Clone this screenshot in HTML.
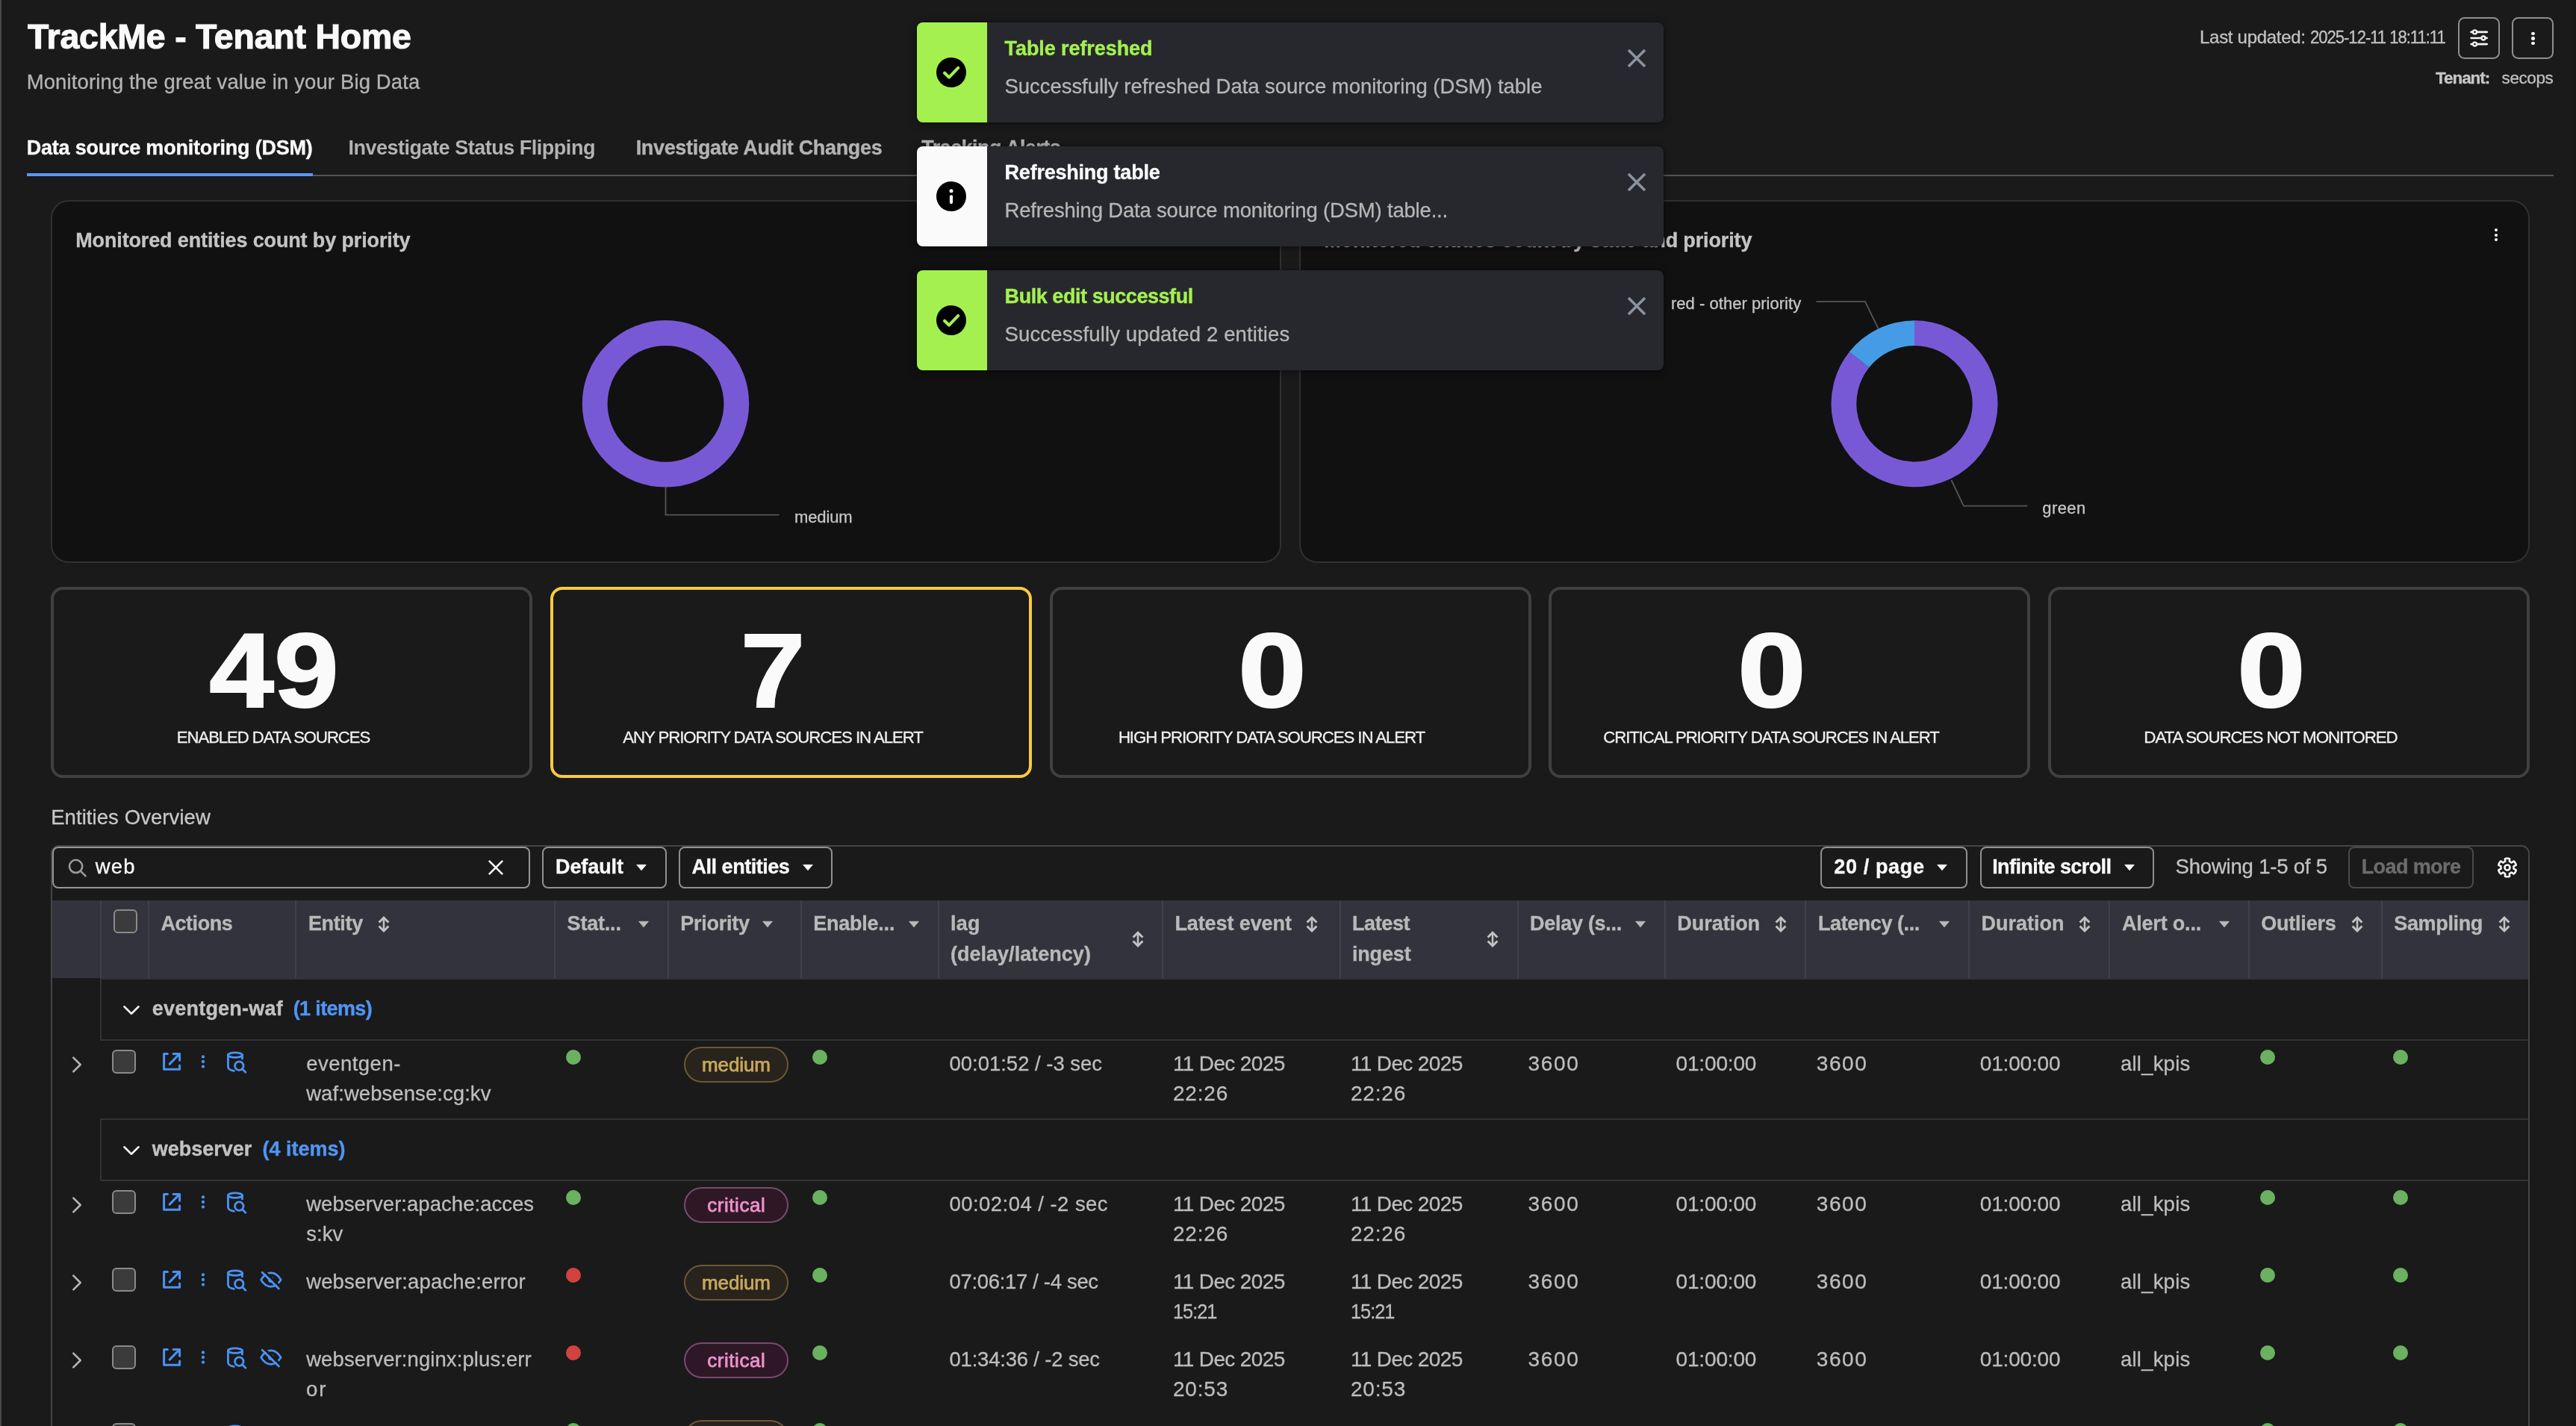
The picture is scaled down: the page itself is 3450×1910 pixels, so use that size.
<!DOCTYPE html>
<html><head><meta charset="utf-8"><title>TrackMe - Tenant Home</title>
<style>
html,body{margin:0;padding:0;background:#1a1a1a;}
body{width:3450px;height:1910px;overflow:hidden;font-family:"Liberation Sans",sans-serif;}
#root{position:relative;width:3450px;height:1910px;overflow:hidden;background:#1a1a1a;will-change:transform;}
#root div,#root span.t,#root svg{position:absolute;box-sizing:border-box;}
span.t{white-space:nowrap;display:block;}
</style></head><body><div id="root">

<div style="left:0px;top:0px;width:2px;height:1910px;background:#484848;"></div>
<div style="left:3440px;top:0px;width:10px;height:1910px;background:linear-gradient(90deg,rgba(0,0,0,0),rgba(0,0,0,0.18));"></div>
<span class="t" style="left:36.89px;top:25px;font-size:47px;font-weight:700;color:#fafafa;line-height:47px;letter-spacing:-0.200px;-webkit-text-stroke:1.1px #fafafa;transform:scaleX(0.9879);transform-origin:0 50%;">TrackMe - Tenant Home</span>
<span class="t" style="left:35.67px;top:96px;font-size:27.5px;font-weight:400;color:#b4b4b4;line-height:27.5px;letter-spacing:0.128px;-webkit-text-stroke:0.3px #b4b4b4;">Monitoring the great value in your Big Data</span>
<span class="t" style="left:2946.08px;top:38px;font-size:24px;font-weight:400;color:#c2c2c2;line-height:24px;letter-spacing:-0.301px;-webkit-text-stroke:0.3px #c2c2c2;">Last updated:</span>
<span class="t" style="left:3094.18px;top:38px;font-size:24px;font-weight:400;color:#c2c2c2;line-height:24px;letter-spacing:-1.100px;-webkit-text-stroke:0.3px #c2c2c2;transform:scaleX(0.9192);transform-origin:0 50%;">2025-12-11 18:11:11</span>
<div style="left:3292px;top:23px;width:56px;height:56px;border:2px solid #8e8e8e;border-radius:8.5px;"></div>
<div style="left:3364px;top:23px;width:56px;height:56px;border:2px solid #8e8e8e;border-radius:8.5px;"></div>
<svg style="left:3306px;top:37px" width="28" height="28" viewBox="0 0 28 28" fill="none" stroke="#f4f4f4" stroke-width="2.7" stroke-linecap="round"><path d="M3.6 5.9H5.6M11.2 5.9H24.7M3.6 14H17M22.6 14H24.7M3.6 22.1H5.6M11.2 22.1H24.7"/><g stroke-width="2.3"><circle cx="8.5" cy="5.9" r="2.5"/><circle cx="20" cy="14" r="2.5"/><circle cx="8.5" cy="22.1" r="2.5"/></g></svg>
<div style="left:3390.2000000000003px;top:42.9px;width:4.4px;height:4.4px;background:#f6f6f6;border-radius:50%;"></div>
<div style="left:3390.2000000000003px;top:49.4px;width:4.4px;height:4.4px;background:#f6f6f6;border-radius:50%;"></div>
<div style="left:3390.2000000000003px;top:55.9px;width:4.4px;height:4.4px;background:#f6f6f6;border-radius:50%;"></div>
<span class="t" style="left:3262.12px;top:94px;font-size:22.5px;font-weight:700;color:#c6c6c6;line-height:22.5px;letter-spacing:-1.088px;-webkit-text-stroke:0.35px #c6c6c6;">Tenant:</span>
<span class="t" style="left:3350.62px;top:94px;font-size:22.5px;font-weight:400;color:#c0c0c0;line-height:22.5px;letter-spacing:-0.429px;-webkit-text-stroke:0.3px #c0c0c0;">secops</span>
<div style="left:36px;top:234px;width:3384px;height:2px;background:#53545c;"></div>
<div style="left:36px;top:232px;width:383px;height:4px;background:#5a97f7;"></div>
<span class="t" style="left:35.69px;top:185px;font-size:27px;font-weight:700;color:#fafafa;line-height:27px;letter-spacing:-0.200px;-webkit-text-stroke:0.35px #fafafa;">Data source monitoring (DSM)</span>
<span class="t" style="left:466.39px;top:185px;font-size:27px;font-weight:700;color:#b3b3b3;line-height:27px;letter-spacing:-0.482px;-webkit-text-stroke:0.0px;">Investigate Status Flipping</span>
<span class="t" style="left:851.69px;top:185px;font-size:27px;font-weight:700;color:#b3b3b3;line-height:27px;letter-spacing:-0.335px;-webkit-text-stroke:0.35px #b3b3b3;">Investigate Audit Changes</span>
<span class="t" style="left:1234.19px;top:185px;font-size:27px;font-weight:700;color:#b3b3b3;line-height:27px;letter-spacing:-0.533px;-webkit-text-stroke:0.35px #b3b3b3;">Tracking Alerts</span>
<div style="left:68px;top:268px;width:1648px;height:486px;background:#111111;border:2px solid #303030;border-radius:24px;"></div>
<div style="left:1740px;top:268px;width:1648px;height:486px;background:#111111;border:2px solid #303030;border-radius:24px;"></div>
<span class="t" style="left:101.19px;top:309px;font-size:27px;font-weight:700;color:#c4c4c4;line-height:27px;letter-spacing:-0.134px;-webkit-text-stroke:0.35px #c4c4c4;">Monitored entities count by priority</span>
<span class="t" style="left:1773.19px;top:309px;font-size:27px;font-weight:700;color:#c4c4c4;line-height:27px;letter-spacing:-0.128px;-webkit-text-stroke:0.35px #c4c4c4;">Monitored entities count by state and priority</span>
<div style="left:3340.5px;top:306px;width:4px;height:4px;background:#fafafa;border-radius:50%;"></div>
<div style="left:3340.5px;top:312.6px;width:4px;height:4px;background:#fafafa;border-radius:50%;"></div>
<div style="left:3340.5px;top:319.2px;width:4px;height:4px;background:#fafafa;border-radius:50%;"></div>
<svg style="left:700px;top:380px" width="520" height="360" viewBox="700 380 520 360" fill="none"><circle cx="891.5" cy="540.8" r="94.8" stroke="#7859d5" stroke-width="33.8"/><path d="M891.5 652.6V689.7H1043.6" stroke="#565656" stroke-width="1.8"/></svg>
<span class="t" style="left:1064.04px;top:682px;font-size:22px;font-weight:400;color:#c6c6c6;line-height:22px;letter-spacing:-0.146px;-webkit-text-stroke:0.3px #c6c6c6;">medium</span>
<svg style="left:2200px;top:380px" width="640" height="360" viewBox="2200 380 640 360" fill="none"><path d="M2564.00 446.20A94.6 94.6 0 1 1 2490.04 481.82" stroke="#7859d5" stroke-width="33.8"/><path d="M2490.04 481.82A94.6 94.6 0 0 1 2564.00 446.20" stroke="#459be6" stroke-width="33.8"/><path d="M2432.4 403.8H2497.9L2515.7 440.4" stroke="#565656" stroke-width="1.8"/><path d="M2613.4 643L2629.8 677.7H2715.4" stroke="#565656" stroke-width="1.8"/></svg>
<span class="t" style="left:2237.94px;top:396px;font-size:22px;font-weight:400;color:#c6c6c6;line-height:22px;letter-spacing:0.031px;-webkit-text-stroke:0.3px #c6c6c6;">red - other priority</span>
<span class="t" style="left:2735.34px;top:670px;font-size:22px;font-weight:400;color:#c6c6c6;line-height:22px;letter-spacing:0.385px;-webkit-text-stroke:0.3px #c6c6c6;">green</span>
<div style="left:68px;top:786px;width:645px;height:256px;border:4px solid #404040;border-radius:16px;"></div>
<span class="t" style="left:366.50px;transform:translateX(-50%);top:828px;font-size:141px;font-weight:700;color:#fafafa;line-height:141px;letter-spacing:0.000px;-webkit-text-stroke:2px #fafafa;transform:translateX(-50%) scaleX(1.105);">49</span>
<span class="t" style="left:365.95px;transform:translateX(-50%);top:977px;font-size:22.5px;font-weight:400;color:#f0f0f0;line-height:22.5px;letter-spacing:-1.100px;-webkit-text-stroke:0.3px #f0f0f0;transform:translateX(-50%) scaleX(0.9848);">ENABLED DATA SOURCES</span>
<div style="left:737px;top:786px;width:645px;height:256px;border:4px solid #f8c944;border-radius:16px;"></div>
<span class="t" style="left:1035.25px;transform:translateX(-50%);top:828px;font-size:141px;font-weight:700;color:#fafafa;line-height:141px;letter-spacing:0.000px;-webkit-text-stroke:2px #fafafa;transform:translateX(-50%) scaleX(1.105);">7</span>
<span class="t" style="left:1034.70px;transform:translateX(-50%);top:977px;font-size:22.5px;font-weight:400;color:#f0f0f0;line-height:22.5px;letter-spacing:-1.100px;-webkit-text-stroke:0.3px #f0f0f0;transform:translateX(-50%) scaleX(0.9904);">ANY PRIORITY DATA SOURCES IN ALERT</span>
<div style="left:1406px;top:786px;width:645px;height:256px;border:4px solid #404040;border-radius:16px;"></div>
<span class="t" style="left:1704.00px;transform:translateX(-50%);top:828px;font-size:141px;font-weight:700;color:#fafafa;line-height:141px;letter-spacing:0.000px;-webkit-text-stroke:2px #fafafa;transform:translateX(-50%) scaleX(1.17);">0</span>
<span class="t" style="left:1703.45px;transform:translateX(-50%);top:977px;font-size:22.5px;font-weight:400;color:#f0f0f0;line-height:22.5px;letter-spacing:-1.100px;-webkit-text-stroke:0.3px #f0f0f0;transform:translateX(-50%) scaleX(0.9887);">HIGH PRIORITY DATA SOURCES IN ALERT</span>
<div style="left:2074px;top:786px;width:645px;height:256px;border:4px solid #404040;border-radius:16px;"></div>
<span class="t" style="left:2372.75px;transform:translateX(-50%);top:828px;font-size:141px;font-weight:700;color:#fafafa;line-height:141px;letter-spacing:0.000px;-webkit-text-stroke:2px #fafafa;transform:translateX(-50%) scaleX(1.17);">0</span>
<span class="t" style="left:2372.20px;transform:translateX(-50%);top:977px;font-size:22.5px;font-weight:400;color:#f0f0f0;line-height:22.5px;letter-spacing:-1.100px;-webkit-text-stroke:0.3px #f0f0f0;transform:translateX(-50%) scaleX(0.9853);">CRITICAL PRIORITY DATA SOURCES IN ALERT</span>
<div style="left:2743px;top:786px;width:645px;height:256px;border:4px solid #404040;border-radius:16px;"></div>
<span class="t" style="left:3041.50px;transform:translateX(-50%);top:828px;font-size:141px;font-weight:700;color:#fafafa;line-height:141px;letter-spacing:0.000px;-webkit-text-stroke:2px #fafafa;transform:translateX(-50%) scaleX(1.17);">0</span>
<span class="t" style="left:3040.95px;transform:translateX(-50%);top:977px;font-size:22.5px;font-weight:400;color:#f0f0f0;line-height:22.5px;letter-spacing:-1.100px;-webkit-text-stroke:0.3px #f0f0f0;transform:translateX(-50%) scaleX(0.9948);">DATA SOURCES NOT MONITORED</span>
<span class="t" style="left:68.17px;top:1081px;font-size:27.5px;font-weight:400;color:#c8c8c8;line-height:27.5px;letter-spacing:0.076px;-webkit-text-stroke:0.3px #c8c8c8;">Entities Overview</span>
<div style="left:68px;top:1132px;width:3320px;height:800px;border:2px solid #454545;border-radius:11px;"></div>
<div style="left:70px;top:1134px;width:640px;height:56px;border:2px solid #969696;border-radius:8px;background:#1a1a1a;"></div>
<svg style="left:90.4px;top:1148.6px" width="28" height="28" viewBox="0 0 28 28" fill="none" stroke="#9a9a9a" stroke-width="2.6" stroke-linecap="round"><circle cx="11.6" cy="11.4" r="8.6"/><path d="M18 17.8L24.6 24.4"/></svg>
<span class="t" style="left:127.67px;top:1147px;font-size:27.5px;font-weight:400;color:#fafafa;line-height:27.5px;letter-spacing:1.248px;-webkit-text-stroke:0.3px #fafafa;">web</span>
<svg style="left:652.1px;top:1150px" width="24" height="24" viewBox="-12 -12 24 24" fill="none" stroke="#f8f8f8" stroke-width="2.7" stroke-linecap="round"><path d="M-8.4 -8.4L8.4 8.4M8.4 -8.4L-8.4 8.4"/></svg>
<div style="left:726px;top:1134px;width:167px;height:56px;border:2px solid #909090;border-radius:8px;"></div>
<span class="t" style="left:743.99px;top:1148px;font-size:27px;font-weight:700;color:#fafafa;line-height:27px;letter-spacing:-0.083px;-webkit-text-stroke:0.35px #fafafa;">Default</span>
<svg style="left:849.2px;top:1154.3px" width="20" height="16" viewBox="-10 -8 20 16"><path d="M-6.25 -3.65H6.25L0 3.65Z" fill="#f6f6f6" stroke="#f6f6f6" stroke-width="0.9" stroke-linejoin="round"/></svg>
<div style="left:909px;top:1134px;width:206px;height:56px;border:2px solid #909090;border-radius:8px;"></div>
<span class="t" style="left:926.59px;top:1148px;font-size:27px;font-weight:700;color:#fafafa;line-height:27px;letter-spacing:-0.492px;-webkit-text-stroke:0.35px #fafafa;">All entities</span>
<svg style="left:1071.6px;top:1154.3px" width="20" height="16" viewBox="-10 -8 20 16"><path d="M-6.25 -3.65H6.25L0 3.65Z" fill="#f6f6f6" stroke="#f6f6f6" stroke-width="0.9" stroke-linejoin="round"/></svg>
<div style="left:2438px;top:1134px;width:196.5px;height:56px;border:2px solid #909090;border-radius:8px;"></div>
<span class="t" style="left:2456.29px;top:1148px;font-size:27px;font-weight:700;color:#fafafa;line-height:27px;letter-spacing:0.632px;-webkit-text-stroke:0.35px #fafafa;">20 / page</span>
<svg style="left:2591.4px;top:1154.3px" width="20" height="16" viewBox="-10 -8 20 16"><path d="M-6.25 -3.65H6.25L0 3.65Z" fill="#f6f6f6" stroke="#f6f6f6" stroke-width="0.9" stroke-linejoin="round"/></svg>
<div style="left:2651.5px;top:1134px;width:233.5px;height:56px;border:2px solid #909090;border-radius:8px;"></div>
<span class="t" style="left:2668.19px;top:1148px;font-size:27px;font-weight:700;color:#fafafa;line-height:27px;letter-spacing:-0.587px;-webkit-text-stroke:0.35px #fafafa;">Infinite scroll</span>
<svg style="left:2841.6px;top:1154.3px" width="20" height="16" viewBox="-10 -8 20 16"><path d="M-6.25 -3.65H6.25L0 3.65Z" fill="#f6f6f6" stroke="#f6f6f6" stroke-width="0.9" stroke-linejoin="round"/></svg>
<span class="t" style="left:2913.58px;top:1147px;font-size:27.5px;font-weight:400;color:#c2c2c2;line-height:27.5px;letter-spacing:-0.196px;-webkit-text-stroke:0.3px #c2c2c2;">Showing 1-5 of 5</span>
<div style="left:3145px;top:1134px;width:168px;height:56px;border:2px solid #4a4a4a;border-radius:8px;"></div>
<span class="t" style="left:3162.69px;top:1148px;font-size:27px;font-weight:700;color:#6c6c6c;line-height:27px;letter-spacing:-0.601px;-webkit-text-stroke:0.35px #6c6c6c;">Load more</span>
<svg style="left:3342px;top:1145.8px" width="32" height="32" viewBox="-16 -16 32 32" fill="none" stroke="#fafafa" stroke-width="2.6" stroke-linejoin="round"><path d="M-2.80 -8.13L-3.09 -11.52Q-2.90 -12.08 -2.14 -12.11A12.3 12.3 0 0 1 2.14 -12.11Q2.90 -12.08 3.09 -11.52L2.80 -8.13A8.6 8.6 0 0 1 5.64 -6.49L8.44 -8.44Q9.01 -8.55 9.42 -7.91A12.3 12.3 0 0 1 11.56 -4.21Q11.91 -3.53 11.52 -3.09L8.44 -1.64A8.6 8.6 0 0 1 8.44 1.64L11.52 3.09Q11.91 3.53 11.56 4.21A12.3 12.3 0 0 1 9.42 7.91Q9.01 8.55 8.44 8.44L5.64 6.49A8.6 8.6 0 0 1 2.80 8.13L3.09 11.52Q2.90 12.08 2.14 12.11A12.3 12.3 0 0 1 -2.14 12.11Q-2.90 12.08 -3.09 11.52L-2.80 8.13A8.6 8.6 0 0 1 -5.64 6.49L-8.44 8.44Q-9.01 8.55 -9.42 7.91A12.3 12.3 0 0 1 -11.56 4.21Q-11.91 3.53 -11.52 3.09L-8.44 1.64A8.6 8.6 0 0 1 -8.44 -1.64L-11.52 -3.09Q-11.91 -3.53 -11.56 -4.21A12.3 12.3 0 0 1 -9.42 -7.91Q-9.01 -8.55 -8.44 -8.44L-5.64 -6.49A8.6 8.6 0 0 1 -2.80 -8.13Z"/><circle cx="0" cy="0" r="3.5"/></svg>
<div style="left:70px;top:1206px;width:3316px;height:104px;background:#32333d;"></div>
<div style="left:134px;top:1206px;width:2px;height:104px;background:#404148;"></div>
<div style="left:198px;top:1206px;width:2px;height:104px;background:#404148;"></div>
<div style="left:395px;top:1206px;width:2px;height:104px;background:#404148;"></div>
<div style="left:741.5px;top:1206px;width:2px;height:104px;background:#404148;"></div>
<div style="left:894px;top:1206px;width:2px;height:104px;background:#404148;"></div>
<div style="left:1071.5px;top:1206px;width:2px;height:104px;background:#404148;"></div>
<div style="left:1256px;top:1206px;width:2px;height:104px;background:#404148;"></div>
<div style="left:1556px;top:1206px;width:2px;height:104px;background:#404148;"></div>
<div style="left:1794px;top:1206px;width:2px;height:104px;background:#404148;"></div>
<div style="left:2031.5px;top:1206px;width:2px;height:104px;background:#404148;"></div>
<div style="left:2229px;top:1206px;width:2px;height:104px;background:#404148;"></div>
<div style="left:2417px;top:1206px;width:2px;height:104px;background:#404148;"></div>
<div style="left:2636px;top:1206px;width:2px;height:104px;background:#404148;"></div>
<div style="left:2824px;top:1206px;width:2px;height:104px;background:#404148;"></div>
<div style="left:3010.5px;top:1206px;width:2px;height:104px;background:#404148;"></div>
<div style="left:3189px;top:1206px;width:2px;height:104px;background:#404148;"></div>
<div style="left:152px;top:1218px;width:32px;height:32px;background:#3b3b3b;border:2px solid #8a8a8a;border-radius:6px;"></div>
<span class="t" style="left:215.39px;top:1224px;font-size:27px;font-weight:700;color:#b9b9b9;line-height:27px;letter-spacing:-0.433px;-webkit-text-stroke:0.35px #b9b9b9;">Actions</span>
<span class="t" style="left:412.89px;top:1224px;font-size:27px;font-weight:700;color:#b9b9b9;line-height:27px;letter-spacing:-0.339px;-webkit-text-stroke:0.35px #b9b9b9;">Entity</span>
<svg style="left:504px;top:1224.9px" width="20" height="26" viewBox="-10 -13 20 26" fill="none" stroke="#c2c2c2" stroke-width="3" stroke-linecap="butt" stroke-linejoin="miter"><path d="M0 -8V8" stroke-width="2.6"/><path d="M-6.4 -2.55L0 -8.95L6.4 -2.55M-6.4 2.55L0 8.95L6.4 2.55"/></svg>
<span class="t" style="left:759.59px;top:1224px;font-size:27px;font-weight:700;color:#b9b9b9;line-height:27px;letter-spacing:-0.199px;-webkit-text-stroke:0.35px #b9b9b9;">Stat...</span>
<svg style="left:851.5px;top:1230.3px" width="20" height="16" viewBox="-10 -8 20 16"><path d="M-6.35 -3.75H6.35L0 3.75Z" fill="#b9b9b9" stroke="#b9b9b9" stroke-width="0.9" stroke-linejoin="round"/></svg>
<span class="t" style="left:911.19px;top:1224px;font-size:27px;font-weight:700;color:#b9b9b9;line-height:27px;letter-spacing:-0.259px;-webkit-text-stroke:0.35px #b9b9b9;">Priority</span>
<svg style="left:1018px;top:1230.3px" width="20" height="16" viewBox="-10 -8 20 16"><path d="M-6.35 -3.75H6.35L0 3.75Z" fill="#b9b9b9" stroke="#b9b9b9" stroke-width="0.9" stroke-linejoin="round"/></svg>
<span class="t" style="left:1089.19px;top:1224px;font-size:27px;font-weight:700;color:#b9b9b9;line-height:27px;letter-spacing:-0.228px;-webkit-text-stroke:0.35px #b9b9b9;">Enable...</span>
<svg style="left:1213.7px;top:1230.3px" width="20" height="16" viewBox="-10 -8 20 16"><path d="M-6.35 -3.75H6.35L0 3.75Z" fill="#b9b9b9" stroke="#b9b9b9" stroke-width="0.9" stroke-linejoin="round"/></svg>
<span class="t" style="left:1272.89px;top:1224px;font-size:27px;font-weight:700;color:#b9b9b9;line-height:27px;letter-spacing:0.302px;-webkit-text-stroke:0.35px #b9b9b9;">lag</span>
<span class="t" style="left:1272.89px;top:1265px;font-size:27px;font-weight:700;color:#b9b9b9;line-height:27px;letter-spacing:0.032px;-webkit-text-stroke:0.35px #b9b9b9;">(delay/latency)</span>
<svg style="left:1513.7px;top:1244.8px" width="20" height="26" viewBox="-10 -13 20 26" fill="none" stroke="#c2c2c2" stroke-width="3" stroke-linecap="butt" stroke-linejoin="miter"><path d="M0 -8V8" stroke-width="2.6"/><path d="M-6.4 -2.55L0 -8.95L6.4 -2.55M-6.4 2.55L0 8.95L6.4 2.55"/></svg>
<span class="t" style="left:1573.39px;top:1224px;font-size:27px;font-weight:700;color:#b9b9b9;line-height:27px;letter-spacing:-0.095px;-webkit-text-stroke:0.35px #b9b9b9;">Latest event</span>
<svg style="left:1747.4px;top:1224.9px" width="20" height="26" viewBox="-10 -13 20 26" fill="none" stroke="#c2c2c2" stroke-width="3" stroke-linecap="butt" stroke-linejoin="miter"><path d="M0 -8V8" stroke-width="2.6"/><path d="M-6.4 -2.55L0 -8.95L6.4 -2.55M-6.4 2.55L0 8.95L6.4 2.55"/></svg>
<span class="t" style="left:1810.89px;top:1224px;font-size:27px;font-weight:700;color:#b9b9b9;line-height:27px;letter-spacing:-0.362px;-webkit-text-stroke:0.35px #b9b9b9;">Latest</span>
<span class="t" style="left:1810.89px;top:1265px;font-size:27px;font-weight:700;color:#b9b9b9;line-height:27px;letter-spacing:-0.139px;-webkit-text-stroke:0.35px #b9b9b9;">ingest</span>
<svg style="left:1988.7px;top:1244.8px" width="20" height="26" viewBox="-10 -13 20 26" fill="none" stroke="#c2c2c2" stroke-width="3" stroke-linecap="butt" stroke-linejoin="miter"><path d="M0 -8V8" stroke-width="2.6"/><path d="M-6.4 -2.55L0 -8.95L6.4 -2.55M-6.4 2.55L0 8.95L6.4 2.55"/></svg>
<span class="t" style="left:2048.99px;top:1224px;font-size:27px;font-weight:700;color:#b9b9b9;line-height:27px;letter-spacing:-0.274px;-webkit-text-stroke:0.35px #b9b9b9;">Delay (s...</span>
<svg style="left:2186.5px;top:1230.3px" width="20" height="16" viewBox="-10 -8 20 16"><path d="M-6.35 -3.75H6.35L0 3.75Z" fill="#b9b9b9" stroke="#b9b9b9" stroke-width="0.9" stroke-linejoin="round"/></svg>
<span class="t" style="left:2246.19px;top:1224px;font-size:27px;font-weight:700;color:#b9b9b9;line-height:27px;letter-spacing:-0.011px;-webkit-text-stroke:0.35px #b9b9b9;">Duration</span>
<svg style="left:2374.6px;top:1224.9px" width="20" height="26" viewBox="-10 -13 20 26" fill="none" stroke="#c2c2c2" stroke-width="3" stroke-linecap="butt" stroke-linejoin="miter"><path d="M0 -8V8" stroke-width="2.6"/><path d="M-6.4 -2.55L0 -8.95L6.4 -2.55M-6.4 2.55L0 8.95L6.4 2.55"/></svg>
<span class="t" style="left:2435.09px;top:1224px;font-size:27px;font-weight:700;color:#b9b9b9;line-height:27px;letter-spacing:-0.448px;-webkit-text-stroke:0.35px #b9b9b9;">Latency (...</span>
<svg style="left:2593.6px;top:1230.3px" width="20" height="16" viewBox="-10 -8 20 16"><path d="M-6.35 -3.75H6.35L0 3.75Z" fill="#b9b9b9" stroke="#b9b9b9" stroke-width="0.9" stroke-linejoin="round"/></svg>
<span class="t" style="left:2653.59px;top:1224px;font-size:27px;font-weight:700;color:#b9b9b9;line-height:27px;letter-spacing:-0.011px;-webkit-text-stroke:0.35px #b9b9b9;">Duration</span>
<svg style="left:2782.1px;top:1224.9px" width="20" height="26" viewBox="-10 -13 20 26" fill="none" stroke="#c2c2c2" stroke-width="3" stroke-linecap="butt" stroke-linejoin="miter"><path d="M0 -8V8" stroke-width="2.6"/><path d="M-6.4 -2.55L0 -8.95L6.4 -2.55M-6.4 2.55L0 8.95L6.4 2.55"/></svg>
<span class="t" style="left:2841.89px;top:1224px;font-size:27px;font-weight:700;color:#b9b9b9;line-height:27px;letter-spacing:-0.188px;-webkit-text-stroke:0.35px #b9b9b9;">Alert o...</span>
<svg style="left:2968.8px;top:1230.3px" width="20" height="16" viewBox="-10 -8 20 16"><path d="M-6.35 -3.75H6.35L0 3.75Z" fill="#b9b9b9" stroke="#b9b9b9" stroke-width="0.9" stroke-linejoin="round"/></svg>
<span class="t" style="left:3028.19px;top:1224px;font-size:27px;font-weight:700;color:#b9b9b9;line-height:27px;letter-spacing:-0.202px;-webkit-text-stroke:0.35px #b9b9b9;">Outliers</span>
<svg style="left:3146.9px;top:1224.9px" width="20" height="26" viewBox="-10 -13 20 26" fill="none" stroke="#c2c2c2" stroke-width="3" stroke-linecap="butt" stroke-linejoin="miter"><path d="M0 -8V8" stroke-width="2.6"/><path d="M-6.4 -2.55L0 -8.95L6.4 -2.55M-6.4 2.55L0 8.95L6.4 2.55"/></svg>
<span class="t" style="left:3206.29px;top:1224px;font-size:27px;font-weight:700;color:#b9b9b9;line-height:27px;letter-spacing:-0.357px;-webkit-text-stroke:0.35px #b9b9b9;">Sampling</span>
<svg style="left:3343.8px;top:1224.9px" width="20" height="26" viewBox="-10 -13 20 26" fill="none" stroke="#c2c2c2" stroke-width="3" stroke-linecap="butt" stroke-linejoin="miter"><path d="M0 -8V8" stroke-width="2.6"/><path d="M-6.4 -2.55L0 -8.95L6.4 -2.55M-6.4 2.55L0 8.95L6.4 2.55"/></svg>
<div style="left:134px;top:1310px;width:3252px;height:84px;border:2px solid #333333;border-right:none;"></div>
<svg style="left:161.9px;top:1342.9px" width="28" height="20" viewBox="-14 -10 28 20" fill="none" stroke="#f0f0f0" stroke-width="2.6" stroke-linecap="round" stroke-linejoin="round"><path d="M-9.6 -4.7L0 4.7L9.6 -4.7"/></svg>
<span class="t" style="left:203.79px;top:1338px;font-size:27px;font-weight:700;color:#c2c2c2;line-height:27px;letter-spacing:0.216px;-webkit-text-stroke:0.35px #c2c2c2;">eventgen-waf</span>
<span class="t" style="left:392.69px;top:1338px;font-size:27px;font-weight:700;color:#4f95f5;line-height:27px;letter-spacing:-0.628px;-webkit-text-stroke:0.35px #4f95f5;">(1 items)</span>
<svg style="left:92.8px;top:1412.3px" width="20" height="28" viewBox="-10 -14 20 28" fill="none" stroke="#b4b4b4" stroke-width="2.6" stroke-linecap="round" stroke-linejoin="round"><path d="M-4.7 -9.3L4.7 0L-4.7 9.3"/></svg>
<div style="left:150px;top:1406px;width:32px;height:32px;background:#3b3b3b;border:2px solid #8a8a8a;border-radius:6px;"></div>
<svg style="left:217px;top:1409px" width="27" height="27" viewBox="0 0 27 27" fill="none" stroke="#4a92f4" stroke-width="3" stroke-linecap="round" stroke-linejoin="round"><path d="M7.4 2.4H2.6V23.3H23.6V18.1"/><path d="M10.2 16.1L23.2 2.8"/><path d="M15.1 2.4H23.6V11.2"/></svg>
<svg style="left:268.1px;top:1412.1px" width="8" height="20" viewBox="-4 -10 8 20" fill="#4a92f4"><circle cx="0" cy="-6.6" r="2.15"/><circle cx="0" cy="0" r="2.15"/><circle cx="0" cy="6.6" r="2.15"/></svg>
<svg style="left:296px;top:1400.2px" width="45" height="44" viewBox="296 1692 45 44" fill="none" stroke="#4a92f4" stroke-width="2.8" stroke-linecap="round"><ellipse cx="314.95" cy="1705.1" rx="9.6" ry="3.25"/><path d="M305.45 1705.1V1720.6C305.45 1723.9 308.6 1725.9 313.4 1726.3"/><path d="M324.45 1705.1V1710"/><circle cx="320.3" cy="1719.6" r="5.75"/><path d="M324.8 1724.1L328.9 1728.2"/></svg>
<span class="t" style="left:410.18px;top:1411px;font-size:27.5px;font-weight:400;color:#bdbdbd;line-height:27.5px;letter-spacing:0.478px;-webkit-text-stroke:0.3px #bdbdbd;">eventgen-</span>
<span class="t" style="left:410.18px;top:1451px;font-size:27.5px;font-weight:400;color:#bdbdbd;line-height:27.5px;letter-spacing:0.068px;-webkit-text-stroke:0.3px #bdbdbd;">waf:websense:cg:kv</span>
<div style="left:758px;top:1406px;width:20px;height:20px;background:#6ab160;border-radius:50%;"></div>
<div style="left:916px;top:1402px;width:140px;height:48px;background:#28231c;border:2px solid #6a5935;border-radius:24px;"></div>
<span class="t" style="left:985.96px;transform:translateX(-50%);top:1413px;font-size:26px;font-weight:400;color:#c9a85c;line-height:26px;letter-spacing:-0.085px;-webkit-text-stroke:0.75px #c9a85c;">medium</span>
<div style="left:1088px;top:1406px;width:20px;height:20px;background:#6ab160;border-radius:50%;"></div>
<span class="t" style="left:1271.47px;top:1411px;font-size:27.5px;font-weight:400;color:#bdbdbd;line-height:27.5px;letter-spacing:-0.013px;-webkit-text-stroke:0.3px #bdbdbd;">00:01:52 / -3 sec</span>
<span class="t" style="left:1570.96px;top:1411px;font-size:28px;font-weight:400;color:#bdbdbd;line-height:28px;letter-spacing:-0.644px;-webkit-text-stroke:0.3px #bdbdbd;">11 Dec 2025</span>
<span class="t" style="left:1570.96px;top:1451px;font-size:28px;font-weight:400;color:#bdbdbd;line-height:28px;letter-spacing:0.825px;-webkit-text-stroke:0.3px #bdbdbd;">22:26</span>
<span class="t" style="left:1808.96px;top:1411px;font-size:28px;font-weight:400;color:#bdbdbd;line-height:28px;letter-spacing:-0.644px;-webkit-text-stroke:0.3px #bdbdbd;">11 Dec 2025</span>
<span class="t" style="left:1808.96px;top:1451px;font-size:28px;font-weight:400;color:#bdbdbd;line-height:28px;letter-spacing:0.825px;-webkit-text-stroke:0.3px #bdbdbd;">22:26</span>
<span class="t" style="left:2046.56px;top:1411px;font-size:28px;font-weight:400;color:#bdbdbd;line-height:28px;letter-spacing:1.694px;-webkit-text-stroke:0.3px #bdbdbd;">3600</span>
<span class="t" style="left:2244.56px;top:1411px;font-size:28px;font-weight:400;color:#bdbdbd;line-height:28px;letter-spacing:-0.160px;-webkit-text-stroke:0.3px #bdbdbd;">01:00:00</span>
<span class="t" style="left:2432.76px;top:1411px;font-size:28px;font-weight:400;color:#bdbdbd;line-height:28px;letter-spacing:1.594px;-webkit-text-stroke:0.3px #bdbdbd;">3600</span>
<span class="t" style="left:2651.76px;top:1411px;font-size:28px;font-weight:400;color:#bdbdbd;line-height:28px;letter-spacing:-0.174px;-webkit-text-stroke:0.3px #bdbdbd;">01:00:00</span>
<span class="t" style="left:2839.98px;top:1411px;font-size:27.5px;font-weight:400;color:#bdbdbd;line-height:27.5px;letter-spacing:0.219px;-webkit-text-stroke:0.3px #bdbdbd;">all_kpis</span>
<div style="left:3027px;top:1406px;width:20px;height:20px;background:#6ab160;border-radius:50%;"></div>
<div style="left:3205px;top:1406px;width:20px;height:20px;background:#6ab160;border-radius:50%;"></div>
<div style="left:134px;top:1498px;width:3252px;height:84px;border:2px solid #333333;border-right:none;"></div>
<svg style="left:161.9px;top:1530.9px" width="28" height="20" viewBox="-14 -10 28 20" fill="none" stroke="#f0f0f0" stroke-width="2.6" stroke-linecap="round" stroke-linejoin="round"><path d="M-9.6 -4.7L0 4.7L9.6 -4.7"/></svg>
<span class="t" style="left:203.79px;top:1526px;font-size:27px;font-weight:700;color:#c2c2c2;line-height:27px;letter-spacing:-0.022px;-webkit-text-stroke:0.35px #c2c2c2;">webserver</span>
<span class="t" style="left:351.49px;top:1526px;font-size:27px;font-weight:700;color:#4f95f5;line-height:27px;letter-spacing:0.009px;-webkit-text-stroke:0.35px #4f95f5;">(4 items)</span>
<svg style="left:92.8px;top:1600.3px" width="20" height="28" viewBox="-10 -14 20 28" fill="none" stroke="#b4b4b4" stroke-width="2.6" stroke-linecap="round" stroke-linejoin="round"><path d="M-4.7 -9.3L4.7 0L-4.7 9.3"/></svg>
<div style="left:150px;top:1594px;width:32px;height:32px;background:#3b3b3b;border:2px solid #8a8a8a;border-radius:6px;"></div>
<svg style="left:217px;top:1597px" width="27" height="27" viewBox="0 0 27 27" fill="none" stroke="#4a92f4" stroke-width="3" stroke-linecap="round" stroke-linejoin="round"><path d="M7.4 2.4H2.6V23.3H23.6V18.1"/><path d="M10.2 16.1L23.2 2.8"/><path d="M15.1 2.4H23.6V11.2"/></svg>
<svg style="left:268.1px;top:1600.1px" width="8" height="20" viewBox="-4 -10 8 20" fill="#4a92f4"><circle cx="0" cy="-6.6" r="2.15"/><circle cx="0" cy="0" r="2.15"/><circle cx="0" cy="6.6" r="2.15"/></svg>
<svg style="left:296px;top:1588.2px" width="45" height="44" viewBox="296 1692 45 44" fill="none" stroke="#4a92f4" stroke-width="2.8" stroke-linecap="round"><ellipse cx="314.95" cy="1705.1" rx="9.6" ry="3.25"/><path d="M305.45 1705.1V1720.6C305.45 1723.9 308.6 1725.9 313.4 1726.3"/><path d="M324.45 1705.1V1710"/><circle cx="320.3" cy="1719.6" r="5.75"/><path d="M324.8 1724.1L328.9 1728.2"/></svg>
<span class="t" style="left:410.18px;top:1599px;font-size:27.5px;font-weight:400;color:#bdbdbd;line-height:27.5px;letter-spacing:0.036px;-webkit-text-stroke:0.3px #bdbdbd;">webserver:apache:acces</span>
<span class="t" style="left:410.18px;top:1639px;font-size:27.5px;font-weight:400;color:#bdbdbd;line-height:27.5px;letter-spacing:0.086px;-webkit-text-stroke:0.3px #bdbdbd;">s:kv</span>
<div style="left:758px;top:1594px;width:20px;height:20px;background:#6ab160;border-radius:50%;"></div>
<div style="left:916px;top:1590px;width:140px;height:48px;background:#2e1826;border:2px solid #7a4a6c;border-radius:24px;"></div>
<span class="t" style="left:986.28px;transform:translateX(-50%);top:1601px;font-size:26px;font-weight:400;color:#ee92cc;line-height:26px;letter-spacing:0.570px;-webkit-text-stroke:0.75px #ee92cc;">critical</span>
<div style="left:1088px;top:1594px;width:20px;height:20px;background:#6ab160;border-radius:50%;"></div>
<span class="t" style="left:1271.47px;top:1599px;font-size:27.5px;font-weight:400;color:#bdbdbd;line-height:27.5px;letter-spacing:0.456px;-webkit-text-stroke:0.3px #bdbdbd;">00:02:04 / -2 sec</span>
<span class="t" style="left:1570.96px;top:1599px;font-size:28px;font-weight:400;color:#bdbdbd;line-height:28px;letter-spacing:-0.644px;-webkit-text-stroke:0.3px #bdbdbd;">11 Dec 2025</span>
<span class="t" style="left:1570.96px;top:1639px;font-size:28px;font-weight:400;color:#bdbdbd;line-height:28px;letter-spacing:0.825px;-webkit-text-stroke:0.3px #bdbdbd;">22:26</span>
<span class="t" style="left:1808.96px;top:1599px;font-size:28px;font-weight:400;color:#bdbdbd;line-height:28px;letter-spacing:-0.644px;-webkit-text-stroke:0.3px #bdbdbd;">11 Dec 2025</span>
<span class="t" style="left:1808.96px;top:1639px;font-size:28px;font-weight:400;color:#bdbdbd;line-height:28px;letter-spacing:0.825px;-webkit-text-stroke:0.3px #bdbdbd;">22:26</span>
<span class="t" style="left:2046.56px;top:1599px;font-size:28px;font-weight:400;color:#bdbdbd;line-height:28px;letter-spacing:1.694px;-webkit-text-stroke:0.3px #bdbdbd;">3600</span>
<span class="t" style="left:2244.56px;top:1599px;font-size:28px;font-weight:400;color:#bdbdbd;line-height:28px;letter-spacing:-0.160px;-webkit-text-stroke:0.3px #bdbdbd;">01:00:00</span>
<span class="t" style="left:2432.76px;top:1599px;font-size:28px;font-weight:400;color:#bdbdbd;line-height:28px;letter-spacing:1.594px;-webkit-text-stroke:0.3px #bdbdbd;">3600</span>
<span class="t" style="left:2651.76px;top:1599px;font-size:28px;font-weight:400;color:#bdbdbd;line-height:28px;letter-spacing:-0.174px;-webkit-text-stroke:0.3px #bdbdbd;">01:00:00</span>
<span class="t" style="left:2839.98px;top:1599px;font-size:27.5px;font-weight:400;color:#bdbdbd;line-height:27.5px;letter-spacing:0.219px;-webkit-text-stroke:0.3px #bdbdbd;">all_kpis</span>
<div style="left:3027px;top:1594px;width:20px;height:20px;background:#6ab160;border-radius:50%;"></div>
<div style="left:3205px;top:1594px;width:20px;height:20px;background:#6ab160;border-radius:50%;"></div>
<svg style="left:92.8px;top:1704.3px" width="20" height="28" viewBox="-10 -14 20 28" fill="none" stroke="#b4b4b4" stroke-width="2.6" stroke-linecap="round" stroke-linejoin="round"><path d="M-4.7 -9.3L4.7 0L-4.7 9.3"/></svg>
<div style="left:150px;top:1698px;width:32px;height:32px;background:#3b3b3b;border:2px solid #8a8a8a;border-radius:6px;"></div>
<svg style="left:217px;top:1701px" width="27" height="27" viewBox="0 0 27 27" fill="none" stroke="#4a92f4" stroke-width="3" stroke-linecap="round" stroke-linejoin="round"><path d="M7.4 2.4H2.6V23.3H23.6V18.1"/><path d="M10.2 16.1L23.2 2.8"/><path d="M15.1 2.4H23.6V11.2"/></svg>
<svg style="left:268.1px;top:1704.1px" width="8" height="20" viewBox="-4 -10 8 20" fill="#4a92f4"><circle cx="0" cy="-6.6" r="2.15"/><circle cx="0" cy="0" r="2.15"/><circle cx="0" cy="6.6" r="2.15"/></svg>
<svg style="left:296px;top:1692.2px" width="45" height="44" viewBox="296 1692 45 44" fill="none" stroke="#4a92f4" stroke-width="2.8" stroke-linecap="round"><ellipse cx="314.95" cy="1705.1" rx="9.6" ry="3.25"/><path d="M305.45 1705.1V1720.6C305.45 1723.9 308.6 1725.9 313.4 1726.3"/><path d="M324.45 1705.1V1710"/><circle cx="320.3" cy="1719.6" r="5.75"/><path d="M324.8 1724.1L328.9 1728.2"/></svg>
<svg style="left:342px;top:1692.2px" width="44" height="44" viewBox="342 1692 44 44" fill="none" stroke="#4a92f4" stroke-width="2.8" stroke-linecap="round" stroke-linejoin="round"><g transform="translate(362.9 1714.1)"><path d="M-13.3 0C-9.6 -6.2 -5 -9.3 0 -9.3S9.6 -6.2 13.3 0C9.6 6.2 5 9.3 0 9.3S-9.6 6.2 -13.3 0Z"/><circle cx="0" cy="0" r="3.9" fill="#4a92f4" stroke="none"/></g><path d="M353.2 1701.9L376 1724.2" stroke="#1a1a1a" stroke-width="3.1" stroke-linecap="butt"/><path d="M351.2 1704.3L373.4 1726"/></svg>
<span class="t" style="left:410.18px;top:1703px;font-size:27.5px;font-weight:400;color:#bdbdbd;line-height:27.5px;letter-spacing:0.144px;-webkit-text-stroke:0.3px #bdbdbd;">webserver:apache:error</span>
<div style="left:758px;top:1698px;width:20px;height:20px;background:#d2423e;border-radius:50%;"></div>
<div style="left:916px;top:1694px;width:140px;height:48px;background:#28231c;border:2px solid #6a5935;border-radius:24px;"></div>
<span class="t" style="left:985.96px;transform:translateX(-50%);top:1705px;font-size:26px;font-weight:400;color:#c9a85c;line-height:26px;letter-spacing:-0.085px;-webkit-text-stroke:0.75px #c9a85c;">medium</span>
<div style="left:1088px;top:1698px;width:20px;height:20px;background:#6ab160;border-radius:50%;"></div>
<span class="t" style="left:1271.47px;top:1703px;font-size:27.5px;font-weight:400;color:#bdbdbd;line-height:27.5px;letter-spacing:-0.326px;-webkit-text-stroke:0.3px #bdbdbd;">07:06:17 / -4 sec</span>
<span class="t" style="left:1570.96px;top:1703px;font-size:28px;font-weight:400;color:#bdbdbd;line-height:28px;letter-spacing:-0.644px;-webkit-text-stroke:0.3px #bdbdbd;">11 Dec 2025</span>
<span class="t" style="left:1570.96px;top:1743px;font-size:28px;font-weight:400;color:#bdbdbd;line-height:28px;letter-spacing:-1.100px;-webkit-text-stroke:0.3px #bdbdbd;transform:scaleX(0.9056);transform-origin:0 50%;">15:21</span>
<span class="t" style="left:1808.96px;top:1703px;font-size:28px;font-weight:400;color:#bdbdbd;line-height:28px;letter-spacing:-0.644px;-webkit-text-stroke:0.3px #bdbdbd;">11 Dec 2025</span>
<span class="t" style="left:1808.96px;top:1743px;font-size:28px;font-weight:400;color:#bdbdbd;line-height:28px;letter-spacing:-1.100px;-webkit-text-stroke:0.3px #bdbdbd;transform:scaleX(0.9056);transform-origin:0 50%;">15:21</span>
<span class="t" style="left:2046.56px;top:1703px;font-size:28px;font-weight:400;color:#bdbdbd;line-height:28px;letter-spacing:1.694px;-webkit-text-stroke:0.3px #bdbdbd;">3600</span>
<span class="t" style="left:2244.56px;top:1703px;font-size:28px;font-weight:400;color:#bdbdbd;line-height:28px;letter-spacing:-0.160px;-webkit-text-stroke:0.3px #bdbdbd;">01:00:00</span>
<span class="t" style="left:2432.76px;top:1703px;font-size:28px;font-weight:400;color:#bdbdbd;line-height:28px;letter-spacing:1.594px;-webkit-text-stroke:0.3px #bdbdbd;">3600</span>
<span class="t" style="left:2651.76px;top:1703px;font-size:28px;font-weight:400;color:#bdbdbd;line-height:28px;letter-spacing:-0.174px;-webkit-text-stroke:0.3px #bdbdbd;">01:00:00</span>
<span class="t" style="left:2839.98px;top:1703px;font-size:27.5px;font-weight:400;color:#bdbdbd;line-height:27.5px;letter-spacing:0.219px;-webkit-text-stroke:0.3px #bdbdbd;">all_kpis</span>
<div style="left:3027px;top:1698px;width:20px;height:20px;background:#6ab160;border-radius:50%;"></div>
<div style="left:3205px;top:1698px;width:20px;height:20px;background:#6ab160;border-radius:50%;"></div>
<svg style="left:92.8px;top:1808.3px" width="20" height="28" viewBox="-10 -14 20 28" fill="none" stroke="#b4b4b4" stroke-width="2.6" stroke-linecap="round" stroke-linejoin="round"><path d="M-4.7 -9.3L4.7 0L-4.7 9.3"/></svg>
<div style="left:150px;top:1802px;width:32px;height:32px;background:#3b3b3b;border:2px solid #8a8a8a;border-radius:6px;"></div>
<svg style="left:217px;top:1805px" width="27" height="27" viewBox="0 0 27 27" fill="none" stroke="#4a92f4" stroke-width="3" stroke-linecap="round" stroke-linejoin="round"><path d="M7.4 2.4H2.6V23.3H23.6V18.1"/><path d="M10.2 16.1L23.2 2.8"/><path d="M15.1 2.4H23.6V11.2"/></svg>
<svg style="left:268.1px;top:1808.1px" width="8" height="20" viewBox="-4 -10 8 20" fill="#4a92f4"><circle cx="0" cy="-6.6" r="2.15"/><circle cx="0" cy="0" r="2.15"/><circle cx="0" cy="6.6" r="2.15"/></svg>
<svg style="left:296px;top:1796.2px" width="45" height="44" viewBox="296 1692 45 44" fill="none" stroke="#4a92f4" stroke-width="2.8" stroke-linecap="round"><ellipse cx="314.95" cy="1705.1" rx="9.6" ry="3.25"/><path d="M305.45 1705.1V1720.6C305.45 1723.9 308.6 1725.9 313.4 1726.3"/><path d="M324.45 1705.1V1710"/><circle cx="320.3" cy="1719.6" r="5.75"/><path d="M324.8 1724.1L328.9 1728.2"/></svg>
<svg style="left:342px;top:1796.2px" width="44" height="44" viewBox="342 1692 44 44" fill="none" stroke="#4a92f4" stroke-width="2.8" stroke-linecap="round" stroke-linejoin="round"><g transform="translate(362.9 1714.1)"><path d="M-13.3 0C-9.6 -6.2 -5 -9.3 0 -9.3S9.6 -6.2 13.3 0C9.6 6.2 5 9.3 0 9.3S-9.6 6.2 -13.3 0Z"/><circle cx="0" cy="0" r="3.9" fill="#4a92f4" stroke="none"/></g><path d="M353.2 1701.9L376 1724.2" stroke="#1a1a1a" stroke-width="3.1" stroke-linecap="butt"/><path d="M351.2 1704.3L373.4 1726"/></svg>
<span class="t" style="left:410.18px;top:1807px;font-size:27.5px;font-weight:400;color:#bdbdbd;line-height:27.5px;letter-spacing:0.086px;-webkit-text-stroke:0.3px #bdbdbd;">webserver:nginx:plus:err</span>
<span class="t" style="left:410.18px;top:1847px;font-size:27.5px;font-weight:400;color:#bdbdbd;line-height:27.5px;letter-spacing:1.800px;-webkit-text-stroke:0.3px #bdbdbd;transform:scaleX(1.0075);transform-origin:0 50%;">or</span>
<div style="left:758px;top:1802px;width:20px;height:20px;background:#d2423e;border-radius:50%;"></div>
<div style="left:916px;top:1798px;width:140px;height:48px;background:#2e1826;border:2px solid #7a4a6c;border-radius:24px;"></div>
<span class="t" style="left:986.28px;transform:translateX(-50%);top:1809px;font-size:26px;font-weight:400;color:#ee92cc;line-height:26px;letter-spacing:0.570px;-webkit-text-stroke:0.75px #ee92cc;">critical</span>
<div style="left:1088px;top:1802px;width:20px;height:20px;background:#6ab160;border-radius:50%;"></div>
<span class="t" style="left:1271.47px;top:1807px;font-size:27.5px;font-weight:400;color:#bdbdbd;line-height:27.5px;letter-spacing:-0.201px;-webkit-text-stroke:0.3px #bdbdbd;">01:34:36 / -2 sec</span>
<span class="t" style="left:1570.96px;top:1807px;font-size:28px;font-weight:400;color:#bdbdbd;line-height:28px;letter-spacing:-0.644px;-webkit-text-stroke:0.3px #bdbdbd;">11 Dec 2025</span>
<span class="t" style="left:1570.96px;top:1847px;font-size:28px;font-weight:400;color:#bdbdbd;line-height:28px;letter-spacing:0.825px;-webkit-text-stroke:0.3px #bdbdbd;">20:53</span>
<span class="t" style="left:1808.96px;top:1807px;font-size:28px;font-weight:400;color:#bdbdbd;line-height:28px;letter-spacing:-0.644px;-webkit-text-stroke:0.3px #bdbdbd;">11 Dec 2025</span>
<span class="t" style="left:1808.96px;top:1847px;font-size:28px;font-weight:400;color:#bdbdbd;line-height:28px;letter-spacing:0.825px;-webkit-text-stroke:0.3px #bdbdbd;">20:53</span>
<span class="t" style="left:2046.56px;top:1807px;font-size:28px;font-weight:400;color:#bdbdbd;line-height:28px;letter-spacing:1.694px;-webkit-text-stroke:0.3px #bdbdbd;">3600</span>
<span class="t" style="left:2244.56px;top:1807px;font-size:28px;font-weight:400;color:#bdbdbd;line-height:28px;letter-spacing:-0.160px;-webkit-text-stroke:0.3px #bdbdbd;">01:00:00</span>
<span class="t" style="left:2432.76px;top:1807px;font-size:28px;font-weight:400;color:#bdbdbd;line-height:28px;letter-spacing:1.594px;-webkit-text-stroke:0.3px #bdbdbd;">3600</span>
<span class="t" style="left:2651.76px;top:1807px;font-size:28px;font-weight:400;color:#bdbdbd;line-height:28px;letter-spacing:-0.174px;-webkit-text-stroke:0.3px #bdbdbd;">01:00:00</span>
<span class="t" style="left:2839.98px;top:1807px;font-size:27.5px;font-weight:400;color:#bdbdbd;line-height:27.5px;letter-spacing:0.219px;-webkit-text-stroke:0.3px #bdbdbd;">all_kpis</span>
<div style="left:3027px;top:1802px;width:20px;height:20px;background:#6ab160;border-radius:50%;"></div>
<div style="left:3205px;top:1802px;width:20px;height:20px;background:#6ab160;border-radius:50%;"></div>
<svg style="left:92.8px;top:1912.3px" width="20" height="28" viewBox="-10 -14 20 28" fill="none" stroke="#b4b4b4" stroke-width="2.6" stroke-linecap="round" stroke-linejoin="round"><path d="M-4.7 -9.3L4.7 0L-4.7 9.3"/></svg>
<div style="left:150px;top:1906px;width:32px;height:32px;background:#3b3b3b;border:2px solid #8a8a8a;border-radius:6px;"></div>
<svg style="left:217px;top:1909px" width="27" height="27" viewBox="0 0 27 27" fill="none" stroke="#4a92f4" stroke-width="3" stroke-linecap="round" stroke-linejoin="round"><path d="M7.4 2.4H2.6V23.3H23.6V18.1"/><path d="M10.2 16.1L23.2 2.8"/><path d="M15.1 2.4H23.6V11.2"/></svg>
<svg style="left:268.1px;top:1912.1px" width="8" height="20" viewBox="-4 -10 8 20" fill="#4a92f4"><circle cx="0" cy="-6.6" r="2.15"/><circle cx="0" cy="0" r="2.15"/><circle cx="0" cy="6.6" r="2.15"/></svg>
<svg style="left:296px;top:1900.2px" width="45" height="44" viewBox="296 1692 45 44" fill="none" stroke="#4a92f4" stroke-width="2.8" stroke-linecap="round"><ellipse cx="314.95" cy="1705.1" rx="9.6" ry="3.25"/><path d="M305.45 1705.1V1720.6C305.45 1723.9 308.6 1725.9 313.4 1726.3"/><path d="M324.45 1705.1V1710"/><circle cx="320.3" cy="1719.6" r="5.75"/><path d="M324.8 1724.1L328.9 1728.2"/></svg>
<span class="t" style="left:410.18px;top:1911px;font-size:27.5px;font-weight:400;color:#bdbdbd;line-height:27.5px;letter-spacing:-0.083px;-webkit-text-stroke:0.3px #bdbdbd;">webserver:nginx:plus:kv</span>
<div style="left:758px;top:1906px;width:20px;height:20px;background:#6ab160;border-radius:50%;"></div>
<div style="left:916px;top:1902px;width:140px;height:48px;background:#28231c;border:2px solid #6a5935;border-radius:24px;"></div>
<span class="t" style="left:985.96px;transform:translateX(-50%);top:1913px;font-size:26px;font-weight:400;color:#c9a85c;line-height:26px;letter-spacing:-0.085px;-webkit-text-stroke:0.75px #c9a85c;">medium</span>
<div style="left:1088px;top:1906px;width:20px;height:20px;background:#6ab160;border-radius:50%;"></div>
<span class="t" style="left:1271.47px;top:1911px;font-size:27.5px;font-weight:400;color:#bdbdbd;line-height:27.5px;letter-spacing:0.456px;-webkit-text-stroke:0.3px #bdbdbd;">00:02:04 / -2 sec</span>
<span class="t" style="left:1570.96px;top:1911px;font-size:28px;font-weight:400;color:#bdbdbd;line-height:28px;letter-spacing:-0.644px;-webkit-text-stroke:0.3px #bdbdbd;">11 Dec 2025</span>
<span class="t" style="left:1570.96px;top:1951px;font-size:28px;font-weight:400;color:#bdbdbd;line-height:28px;letter-spacing:0.825px;-webkit-text-stroke:0.3px #bdbdbd;">22:26</span>
<span class="t" style="left:1808.96px;top:1911px;font-size:28px;font-weight:400;color:#bdbdbd;line-height:28px;letter-spacing:-0.644px;-webkit-text-stroke:0.3px #bdbdbd;">11 Dec 2025</span>
<span class="t" style="left:1808.96px;top:1951px;font-size:28px;font-weight:400;color:#bdbdbd;line-height:28px;letter-spacing:0.825px;-webkit-text-stroke:0.3px #bdbdbd;">22:26</span>
<span class="t" style="left:2046.56px;top:1911px;font-size:28px;font-weight:400;color:#bdbdbd;line-height:28px;letter-spacing:1.694px;-webkit-text-stroke:0.3px #bdbdbd;">3600</span>
<span class="t" style="left:2244.56px;top:1911px;font-size:28px;font-weight:400;color:#bdbdbd;line-height:28px;letter-spacing:-0.160px;-webkit-text-stroke:0.3px #bdbdbd;">01:00:00</span>
<span class="t" style="left:2432.76px;top:1911px;font-size:28px;font-weight:400;color:#bdbdbd;line-height:28px;letter-spacing:1.594px;-webkit-text-stroke:0.3px #bdbdbd;">3600</span>
<span class="t" style="left:2651.76px;top:1911px;font-size:28px;font-weight:400;color:#bdbdbd;line-height:28px;letter-spacing:-0.174px;-webkit-text-stroke:0.3px #bdbdbd;">01:00:00</span>
<span class="t" style="left:2839.98px;top:1911px;font-size:27.5px;font-weight:400;color:#bdbdbd;line-height:27.5px;letter-spacing:0.219px;-webkit-text-stroke:0.3px #bdbdbd;">all_kpis</span>
<div style="left:3027px;top:1906px;width:20px;height:20px;background:#6ab160;border-radius:50%;"></div>
<div style="left:3205px;top:1906px;width:20px;height:20px;background:#6ab160;border-radius:50%;"></div>
<div style="left:1228px;top:30px;width:1000px;height:134px;background:#27282e;border-radius:8px;box-shadow:0 2px 12px rgba(0,0,0,0.4),0 0 3px rgba(0,0,0,0.3);overflow:hidden;"></div>
<div style="left:1228px;top:30px;width:94px;height:134px;background:#a3f04f;border-radius:8px 0 0 8px;"></div>
<div style="left:1254px;top:77px;width:40px;height:40px;background:#000;border-radius:50%;"></div>
<svg style="left:1254px;top:77px" width="40" height="40" viewBox="0 0 40 40" fill="none" stroke="#a3f04f" stroke-width="4.1" stroke-linecap="round" stroke-linejoin="round"><path d="M11.1 20.7L17 26.6L29.2 13.9"/></svg>
<span class="t" style="left:1345.59px;top:52px;font-size:27px;font-weight:700;color:#a3f04f;line-height:27px;letter-spacing:-0.083px;-webkit-text-stroke:0.35px #a3f04f;">Table refreshed</span>
<span class="t" style="left:1345.58px;top:102px;font-size:27.5px;font-weight:400;color:#b6b6b6;line-height:27.5px;letter-spacing:-0.055px;-webkit-text-stroke:0.3px #b6b6b6;">Successfully refreshed Data source monitoring (DSM) table</span>
<svg style="left:2176px;top:62.1px" width="32" height="32" viewBox="-16 -16 32 32" fill="none" stroke="#8b939f" stroke-width="3.6" stroke-linecap="butt"><path d="M-11 -11L11 11M11 -11L-11 11"/></svg>
<div style="left:1228px;top:196px;width:1000px;height:134px;background:#27282e;border-radius:8px;box-shadow:0 2px 12px rgba(0,0,0,0.4),0 0 3px rgba(0,0,0,0.3);overflow:hidden;"></div>
<div style="left:1228px;top:196px;width:94px;height:134px;background:#fafafa;border-radius:8px 0 0 8px;"></div>
<div style="left:1254px;top:243px;width:40px;height:40px;background:#000;border-radius:50%;"></div>
<svg style="left:1254px;top:243px" width="40" height="40" viewBox="0 0 40 40" fill="none" stroke="#fafafa" stroke-width="4.2" stroke-linecap="round"><path d="M20 20.3V28.1"/><circle cx="20" cy="12.700" r="2.500" fill="#fafafa" stroke="none"/></svg>
<span class="t" style="left:1345.59px;top:218px;font-size:27px;font-weight:700;color:#fafafa;line-height:27px;letter-spacing:-0.228px;-webkit-text-stroke:0.35px #fafafa;">Refreshing table</span>
<span class="t" style="left:1345.58px;top:268px;font-size:27.5px;font-weight:400;color:#b6b6b6;line-height:27.5px;letter-spacing:-0.182px;-webkit-text-stroke:0.3px #b6b6b6;">Refreshing Data source monitoring (DSM) table...</span>
<svg style="left:2176px;top:228.1px" width="32" height="32" viewBox="-16 -16 32 32" fill="none" stroke="#8b939f" stroke-width="3.6" stroke-linecap="butt"><path d="M-11 -11L11 11M11 -11L-11 11"/></svg>
<div style="left:1228px;top:362px;width:1000px;height:134px;background:#27282e;border-radius:8px;box-shadow:0 2px 12px rgba(0,0,0,0.4),0 0 3px rgba(0,0,0,0.3);overflow:hidden;"></div>
<div style="left:1228px;top:362px;width:94px;height:134px;background:#a3f04f;border-radius:8px 0 0 8px;"></div>
<div style="left:1254px;top:409px;width:40px;height:40px;background:#000;border-radius:50%;"></div>
<svg style="left:1254px;top:409px" width="40" height="40" viewBox="0 0 40 40" fill="none" stroke="#a3f04f" stroke-width="4.1" stroke-linecap="round" stroke-linejoin="round"><path d="M11.1 20.7L17 26.6L29.2 13.9"/></svg>
<span class="t" style="left:1345.59px;top:384px;font-size:27px;font-weight:700;color:#a3f04f;line-height:27px;letter-spacing:-0.446px;-webkit-text-stroke:0.35px #a3f04f;">Bulk edit successful</span>
<span class="t" style="left:1345.58px;top:434px;font-size:27.5px;font-weight:400;color:#b6b6b6;line-height:27.5px;letter-spacing:0.135px;-webkit-text-stroke:0.3px #b6b6b6;">Successfully updated 2 entities</span>
<svg style="left:2176px;top:394.1px" width="32" height="32" viewBox="-16 -16 32 32" fill="none" stroke="#8b939f" stroke-width="3.6" stroke-linecap="butt"><path d="M-11 -11L11 11M11 -11L-11 11"/></svg>
</div></body></html>
